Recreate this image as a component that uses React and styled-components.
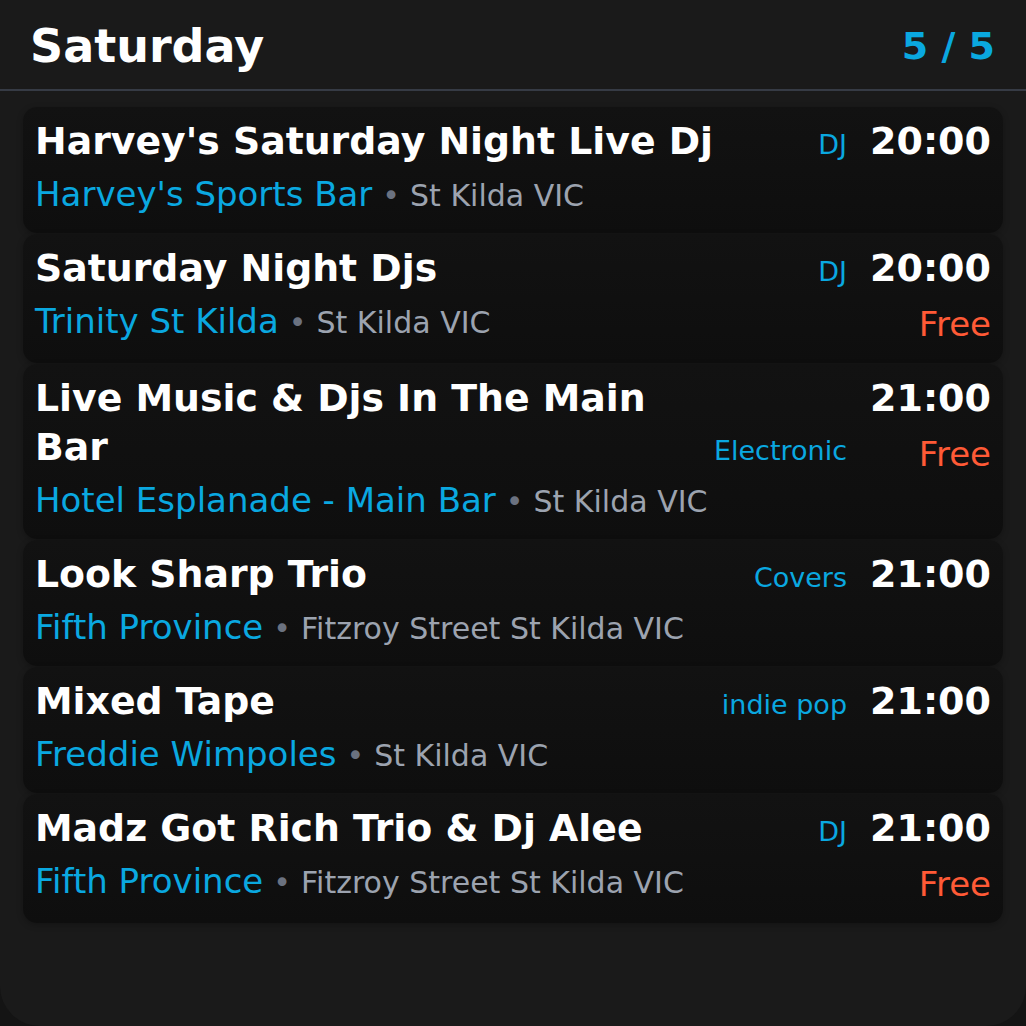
import React from 'react';
import styled, { createGlobalStyle } from 'styled-components';

const GlobalStyle = createGlobalStyle`
  html, body {
    margin: 0;
    padding: 0;
    background: #141414;
  }
  * {
    box-sizing: border-box;
  }
`;

const Screen = styled.div`
  width: 1026px;
  height: 1026px;
  background: #1a1a1a;
  border-radius: 0 0 40px 40px;
  font-family: "DejaVu Sans", "Liberation Sans", sans-serif;
  overflow: hidden;
  display: flex;
  flex-direction: column;
`;

const Header = styled.header`
  height: 91px;
  display: flex;
  align-items: center;
  justify-content: space-between;
  padding: 3px 31px 0 30px;
  border-bottom: 2px solid #363b45;
`;

const DayTitle = styled.h1`
  margin: 0;
  font-size: 46px;
  font-weight: bold;
  color: #ffffff;
`;

const Counter = styled.span`
  font-size: 38px;
  font-weight: bold;
  color: #0aa8e0;
`;

const GigList = styled.div`
  display: flex;
  flex-direction: column;
  gap: 1px;
  padding: 16px 23px;
`;

const Card = styled.div`
  display: flex;
  gap: 23px;
  padding: 10px 12px 13px;
  border-radius: 14px;
  background: linear-gradient(180deg, #121212 0%, #0e0e0e 100%);
  box-shadow: 0 2px 6px rgba(0, 0, 0, 0.25);
`;

const Main = styled.div`
  flex: 1;
  min-width: 0;
  display: flex;
  flex-direction: column;
`;

const TopRow = styled.div`
  display: flex;
  align-items: last baseline;
  justify-content: space-between;
  gap: 24px;
`;

const Title = styled.div`
  font-size: 37.8px;
  font-weight: bold;
  line-height: 49px;
  color: #ffffff;
`;

const Genre = styled.span`
  flex-shrink: 0;
  font-size: 27px;
  color: #0aa8e0;
  white-space: nowrap;
`;

const VenueLine = styled.div`
  margin-top: 3px;
  line-height: 1.5;
  white-space: nowrap;
`;

const Venue = styled.span`
  font-size: 34px;
  color: #0aa8e0;
`;

const Dot = styled.span`
  font-size: 30px;
  color: #6b7280;
  margin: 0 10px;
`;

const Location = styled.span`
  font-size: 30px;
  color: #9ca3af;
`;

const Side = styled.div`
  display: flex;
  flex-direction: column;
  align-items: flex-end;
  flex-shrink: 0;
`;

const Time = styled.div`
  font-size: 38px;
  font-weight: bold;
  line-height: 49px;
  color: #ffffff;
`;

const Price = styled.div`
  margin-top: 6px;
  font-size: 34px;
  line-height: 1.5;
  color: #ff5a36;
`;

const gigs = [
  { title: "Harvey's Saturday Night Live Dj", genre: 'DJ', time: '20:00', venue: "Harvey's Sports Bar", location: 'St Kilda VIC' },
  { title: 'Saturday Night Djs', genre: 'DJ', time: '20:00', venue: 'Trinity St Kilda', location: 'St Kilda VIC', free: true },
  { title: 'Live Music & Djs In The Main Bar', genre: 'Electronic', time: '21:00', venue: 'Hotel Esplanade - Main Bar', location: 'St Kilda VIC', free: true },
  { title: 'Look Sharp Trio', genre: 'Covers', time: '21:00', venue: 'Fifth Province', location: 'Fitzroy Street St Kilda VIC' },
  { title: 'Mixed Tape', genre: 'indie pop', time: '21:00', venue: 'Freddie Wimpoles', location: 'St Kilda VIC' },
  { title: 'Madz Got Rich Trio & Dj Alee', genre: 'DJ', time: '21:00', venue: 'Fifth Province', location: 'Fitzroy Street St Kilda VIC', free: true },
];

const GigCard = ({ gig }) => (
  <Card>
    <Main>
      <TopRow>
        <Title>{gig.title}</Title>
        <Genre>{gig.genre}</Genre>
      </TopRow>
      <VenueLine>
        <Venue>{gig.venue}</Venue>
        <Dot>•</Dot>
        <Location>{gig.location}</Location>
      </VenueLine>
    </Main>
    <Side>
      <Time>{gig.time}</Time>
      {gig.free && <Price>Free</Price>}
    </Side>
  </Card>
);

const App = () => {
  return (
    <>
      <GlobalStyle />
      <Screen>
        <Header>
          <DayTitle>Saturday</DayTitle>
          <Counter>5 / 5</Counter>
        </Header>
        <GigList>
          {gigs.map((gig, i) => (
            <GigCard key={i} gig={gig} />
          ))}
        </GigList>
      </Screen>
    </>
  );
};

export default App;
